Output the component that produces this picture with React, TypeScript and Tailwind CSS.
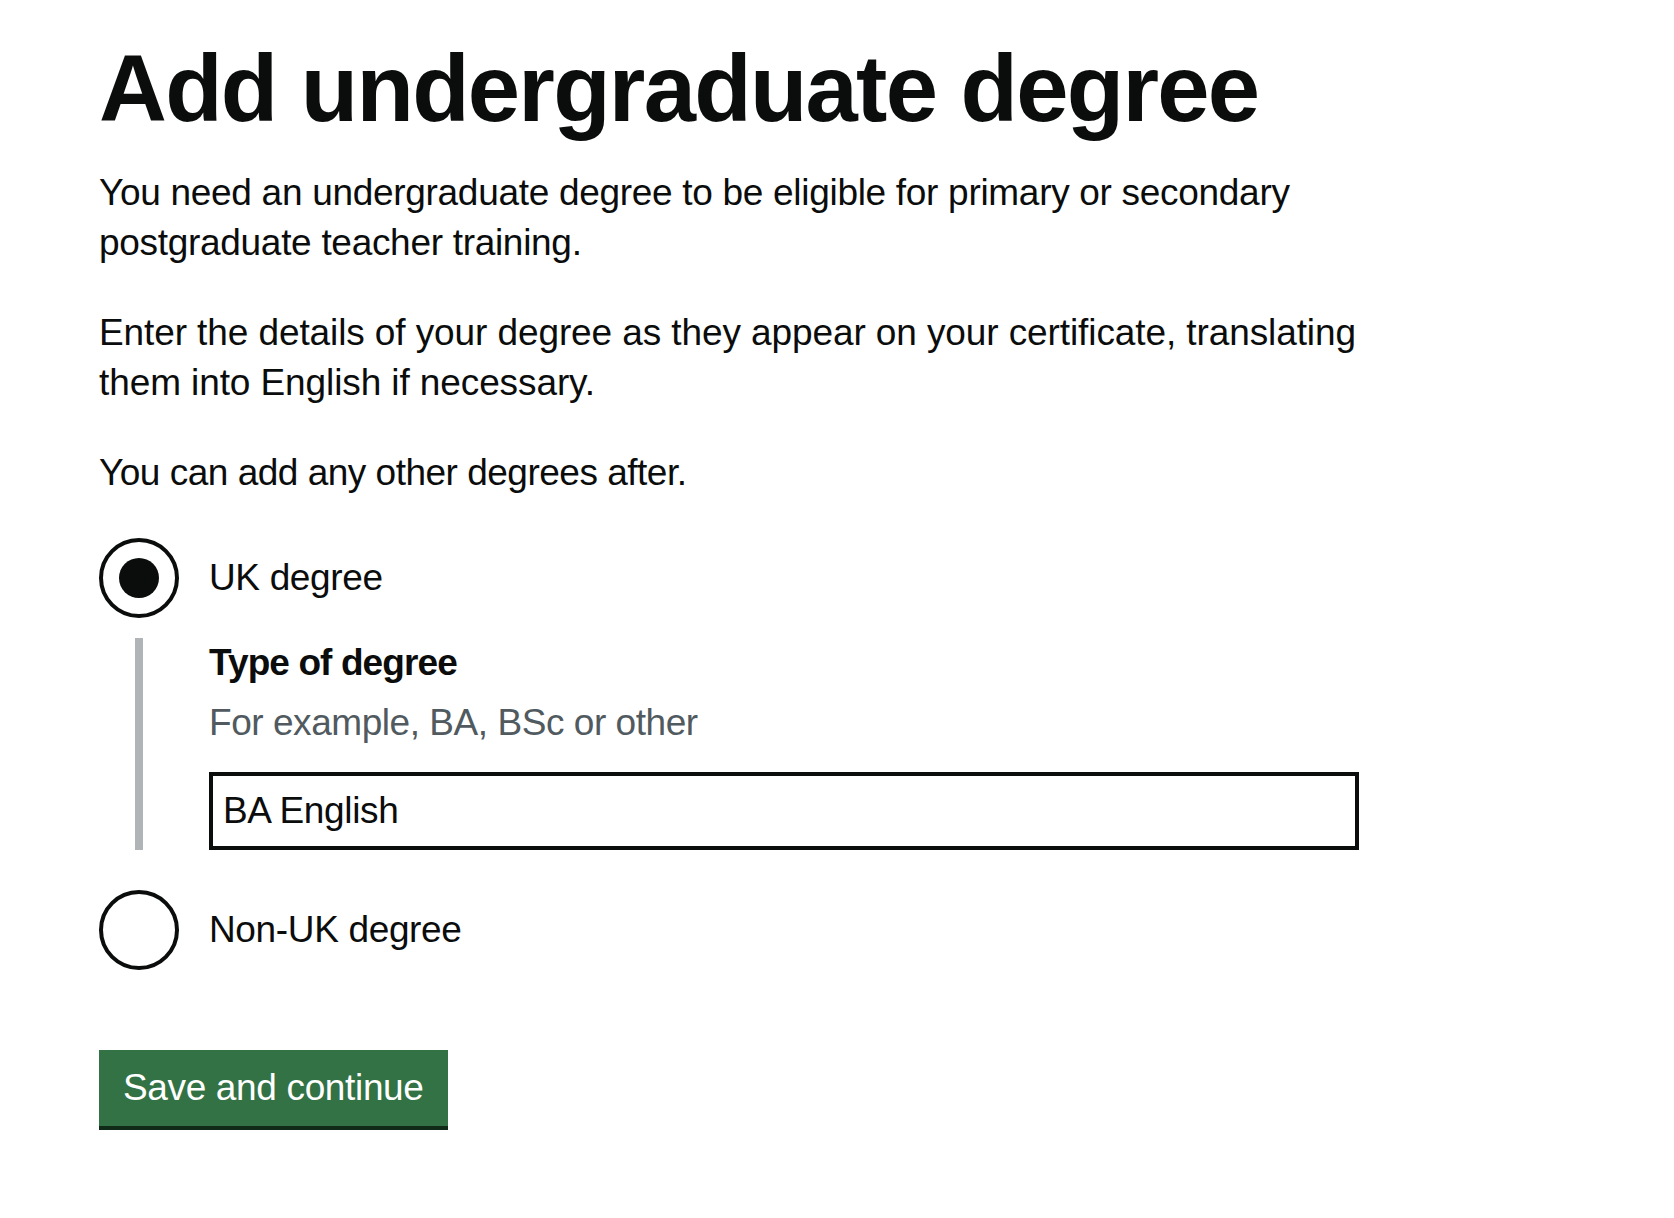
import React from "react";

function Radio({ checked, label }: { checked: boolean; label: string }) {
  return (
    <label className="flex items-center h-[80px]">
      <span className="w-[80px] h-[80px] rounded-full border-[4px] border-[#0b0c0c] flex items-center justify-center shrink-0 box-border">
        {checked && <span className="w-[40px] h-[40px] rounded-full bg-[#0b0c0c]" />}
      </span>
      <span className="pl-[30px] text-[37px] leading-[50px] tracking-[-0.35px]">{label}</span>
    </label>
  );
}

export default function App() {
  return (
    <div className="min-h-[1218px] bg-white text-[#0b0c0c] font-['Liberation_Sans',Arial,sans-serif] pl-[99px] pt-[39px]">
      <h1 className="text-[94px] font-bold leading-[100px] tracking-[-1.75px] mb-[29px] whitespace-nowrap">
        Add undergraduate degree
      </h1>
      <p className="text-[37px] leading-[50px] tracking-[-0.3px] mb-[40px] whitespace-nowrap">
        You need an undergraduate degree to be eligible for primary or secondary
        <br />
        postgraduate teacher training.
      </p>
      <p className="text-[37px] leading-[50px] tracking-[-0.1px] mb-[40px] whitespace-nowrap">
        Enter the details of your degree as they appear on your certificate, translating
        <br />
        them into English if necessary.
      </p>
      <p className="text-[37px] leading-[50px] tracking-[-0.5px] mb-[40px] whitespace-nowrap">
        You can add any other degrees after.
      </p>

      <div>
        <Radio checked label="UK degree" />
        <div className="mt-[20px] ml-[36px] border-l-[8px] border-[#b1b4b6] pl-[66px]">
          <label className="block font-bold text-[37px] leading-[50px] tracking-[-0.9px] mb-[10px]">
            Type of degree
          </label>
          <div className="text-[#505a5f] text-[37px] leading-[50px] tracking-[-0.45px] mb-[24px]">
            For example, BA, BSc or other
          </div>
          <input
            className="block w-[1150px] h-[78px] border-[4px] border-[#0b0c0c] px-[10px] text-[37px] tracking-[-0.35px] text-[#0b0c0c] outline-none bg-white font-['Liberation_Sans',Arial,sans-serif]"
            defaultValue="BA English"
          />
        </div>
        <div className="mt-[40px]">
          <Radio checked={false} label="Non-UK degree" />
        </div>
      </div>

      <button className="mt-[80px] h-[76px] px-[24px] bg-[#327244] text-white text-[37px] tracking-[-0.35px] shadow-[0_4px_0_#102a18] font-['Liberation_Sans',Arial,sans-serif]">
        Save and continue
      </button>
    </div>
  );
}
